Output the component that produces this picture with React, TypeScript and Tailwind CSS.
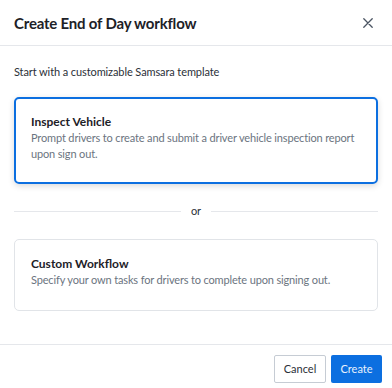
import React from "react";

export default function App() {
  return (
    <div
      className="w-[392px] h-[388px] bg-white flex flex-col overflow-hidden"
      style={{ fontFamily: "Lato, 'Liberation Sans', sans-serif" }}
    >
      <div className="h-[46px] flex-none border-b border-[#e5e7eb] flex items-center justify-between pl-[14px] pr-[19px]">
        <div className="text-[15px] font-bold text-[#1d2127] leading-[20px] tracking-[-0.2px]">Create End of Day workflow</div>
        <svg width="10" height="10" viewBox="0 0 10 10" className="text-[#4b5563]">
          <path d="M0.8 0.8L9.2 9.2M9.2 0.8L0.8 9.2" stroke="currentColor" strokeWidth="1.3" strokeLinecap="round" />
        </svg>
      </div>
      <div className="flex-none px-[14px] pt-[18px] pb-[33px]">
        <div className="text-[11px] leading-[16px] text-[#2b3038] tracking-[-0.1px]">Start with a customizable Samsara template</div>
        <div className="mt-[17px] h-[87px] rounded-[5px] border-2 border-[#0c6fe0] px-[15px] pt-[15px] pb-[20px] shadow-[0_2px_6px_rgba(0,0,0,0.15)]">
          <div className="text-[12px] font-bold leading-[16px] text-[#1d2127]">Inspect Vehicle</div>
          <div className="text-[11px] leading-[16px] text-[#6b7480] tracking-[-0.15px]">
            Prompt drivers to create and submit a driver vehicle inspection report upon sign out.
          </div>
        </div>
        <div className="mt-[19px] mb-[20px] h-[16px] flex items-center gap-[10px]">
          <div className="flex-1 h-px bg-[#e5e7eb]" />
          <div className="text-[11px] leading-[16px] text-[#2b3038]">or</div>
          <div className="flex-1 h-px bg-[#e5e7eb]" />
        </div>
        <div className="h-[72px] rounded-[5px] border border-[#e1e4e8] px-[16px] pt-[16px] pb-[22px]">
          <div className="text-[12px] font-bold leading-[16px] text-[#1d2127]">Custom Workflow</div>
          <div className="text-[11px] leading-[16px] text-[#6b7480] tracking-[-0.15px]">
            Specify your own tasks for drivers to complete upon signing out.
          </div>
        </div>
      </div>
      <div className="flex-none border-t border-[#e5e7eb] pt-[10px] pr-[10px] flex justify-end gap-[5px]">
        <button className="w-[52px] h-[28px] border border-[#c6ccd4] rounded-[2px] bg-white text-[11px] text-[#2b3038]">
          Cancel
        </button>
        <button className="w-[51px] h-[28px] rounded-[2px] bg-[#0c6fe0] text-[11px] text-[#e8f1fc]">
          Create
        </button>
      </div>
    </div>
  );
}
